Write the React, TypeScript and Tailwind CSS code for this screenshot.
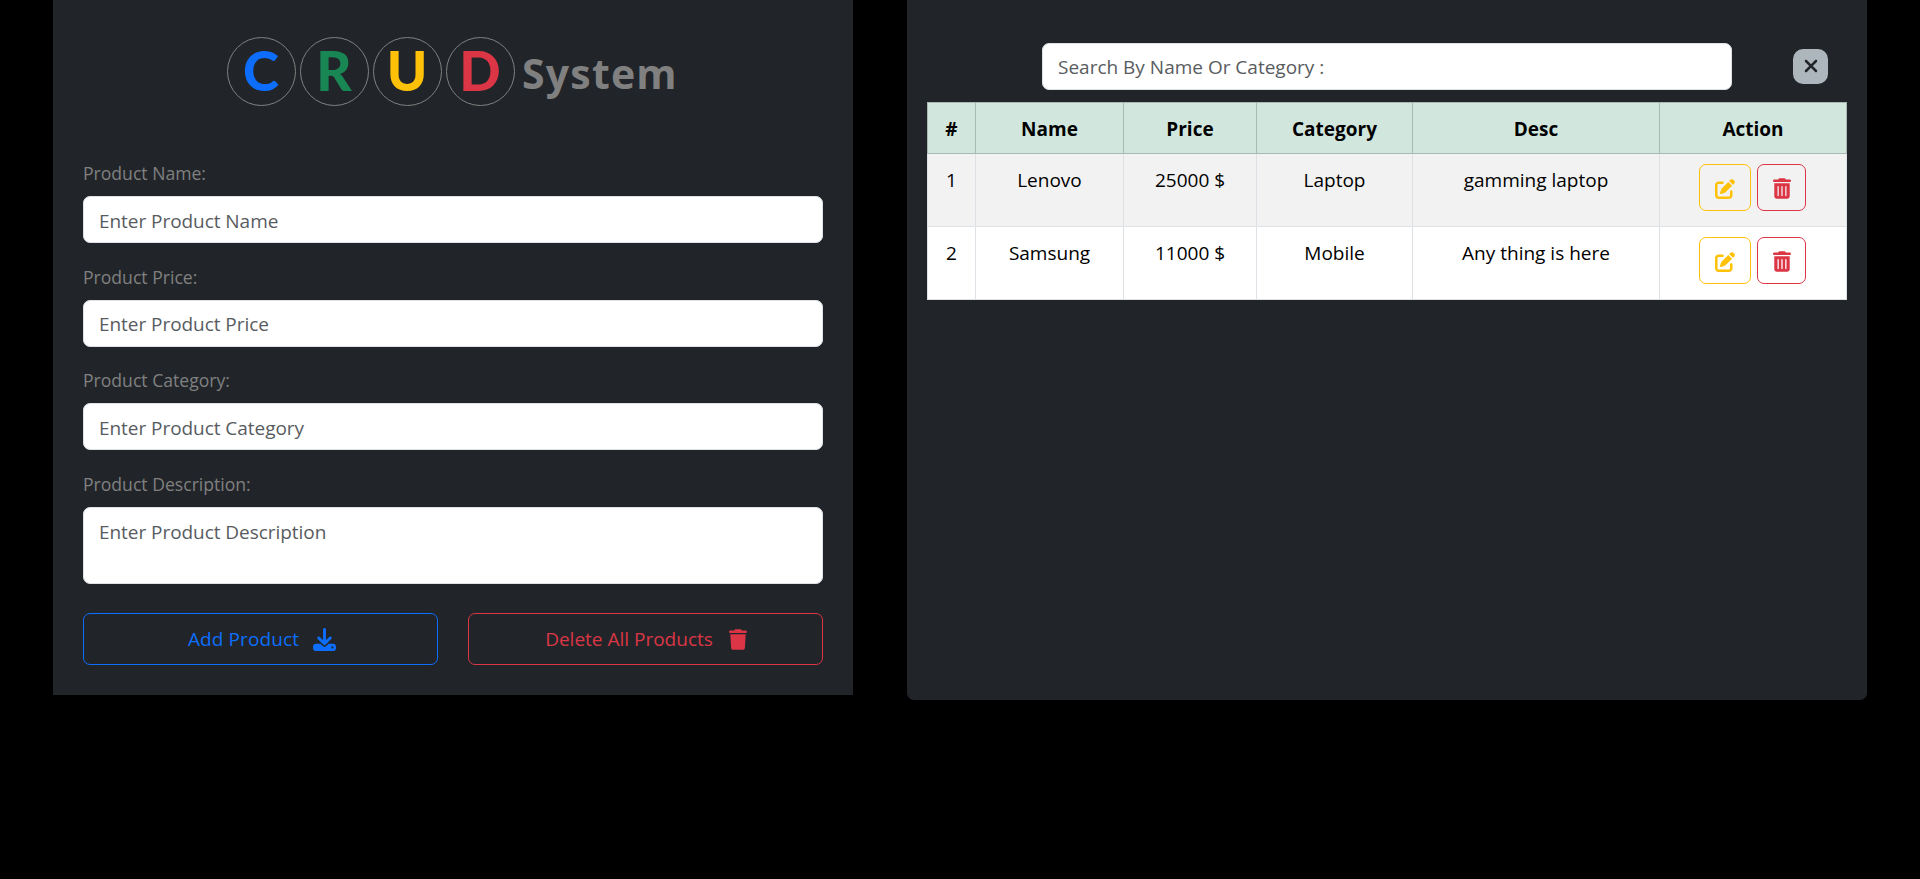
import React from "react";
import { FaDownload, FaTrash, FaTrashCan, FaPenToSquare, FaXmark } from "react-icons/fa6";

const letters = [
  { char: "C", color: "text-[#0d6efd]" },
  { char: "R", color: "text-[#198754]" },
  { char: "U", color: "text-[#ffc107]" },
  { char: "D", color: "text-[#dc3545]" },
];

const fields = [
  { label: "Product Name:", placeholder: "Enter Product Name" },
  { label: "Product Price:", placeholder: "Enter Product Price" },
  { label: "Product Category:", placeholder: "Enter Product Category" },
];

const products = [
  { name: "Lenovo", price: "25000 $", category: "Laptop", desc: "gamming laptop" },
  { name: "Samsung", price: "11000 $", category: "Mobile", desc: "Any thing is here" },
];

const inputClass =
  "block w-full rounded-[7px] border border-[#dee2e6] bg-white px-[15px] text-[19px] text-[#212529] placeholder:text-[#595c5f] placeholder:opacity-100 outline-none";

function ProductForm() {
  return (
    <section className="h-[695px] w-[800px] shrink-0 bg-[#212529] px-[30px] pt-[35px]">
      <h1 className="flex h-[72px] items-center pt-px pl-[144px] font-['Lato',sans-serif] font-bold">
        {letters.map((l) => (
          <span
            key={l.char}
            className={`mr-1 flex h-[69px] w-[69px] shrink-0 items-center justify-center rounded-full border border-[#808080] pr-px pb-[3px] text-[54.5px] leading-none font-black ${l.color}`}
          >
            {l.char}
          </span>
        ))}
        <span className="ml-[3px] pt-[3px] font-['Open_Sans',sans-serif] text-[41px] leading-none font-bold tracking-[1.2px] text-[#808080]">System</span>
      </h1>
      <form className="pt-[53px]">
        {fields.map((f) => (
          <label key={f.label} className="mb-[20.5px] block">
            <span className="mb-[9px] block h-[27px] text-[17.6px] leading-[27px] text-[#808080]">{f.label}</span>
            <input className={`${inputClass} h-[47px] pt-[2px] tracking-[-0.05px]`} placeholder={f.placeholder} />
          </label>
        ))}
        <label className="block">
          <span className="mb-[9px] block h-[27px] text-[17.6px] leading-[27px] text-[#808080]">Product Description:</span>
          <textarea
            className={`${inputClass} h-[77px] resize-none py-[9px] leading-[30px] tracking-[-0.05px]`}
            placeholder="Enter Product Description"
          />
        </label>
        <div className="mt-[29.5px] grid grid-cols-2 gap-[30px]">
          <button type="button" className="flex h-[52px] items-center justify-center gap-[14px] rounded-[7px] border border-[#0d6efd] pt-px pl-[3px] text-[19px] text-[#0d6efd]">
            <span className="tracking-[0.1px]">Add Product</span>
            <FaDownload className="h-[23px] w-[23px]" />
          </button>
          <button type="button" className="flex h-[52px] items-center justify-center gap-[16px] rounded-[7px] border border-[#dc3545] pt-px pl-px text-[19px] text-[#dc3545]">
            Delete All Products
            <FaTrash className="h-[21px] w-[18px]" />
          </button>
        </div>
      </form>
    </section>
  );
}

function ProductTable() {
  return (
    <section className="h-[700px] w-[960px] shrink-0 rounded-b-[7px] bg-[#212529] px-5 pt-[43px]">
      <div className="flex items-start pl-[115px]">
        <input className={`${inputClass} h-[47px] !w-[690px]`} placeholder="Search By Name Or Category :" />
        <button type="button" className="mt-[6px] ml-[61px] flex h-[35px] w-[35px] items-center justify-center rounded-[10px] bg-[#adb5bd] pb-[2px] text-[#212529]">
          <FaXmark className="h-5 w-5" />
        </button>
      </div>
      <table className="mt-3 w-[919px] table-fixed border-collapse text-center text-[19px] text-black">
        <colgroup>
          <col className="w-[48px]" />
          <col className="w-[148px]" />
          <col className="w-[133px]" />
          <col className="w-[156px]" />
          <col className="w-[247px]" />
          <col className="w-[187px]" />
        </colgroup>
        <thead>
          <tr className="h-[51px] bg-[#d1e7dd]">
            {["#", "Name", "Price", "Category", "Desc", "Action"].map((h) => (
              <th key={h} className="border border-[#a7b9b1] pt-[3px] font-bold">
                {h}
              </th>
            ))}
          </tr>
        </thead>
        <tbody>
          {products.map((p, i) => (
            <tr key={p.name} className="h-[73px] align-top odd:bg-[#f2f2f2] even:bg-white [&>td]:border [&>td]:border-[#dee2e6] [&>td]:pt-[10px] [&>td]:leading-[32px]">
              <td>{i + 1}</td>
              <td>{p.name}</td>
              <td>{p.price}</td>
              <td>{p.category}</td>
              <td>{p.desc}</td>
              <td>
                <div className="flex justify-center gap-[6px] pr-px">
                  <button type="button" className="flex h-[47px] w-[52px] items-center justify-center rounded-[7px] border border-[#ffc107] pt-[2px] text-[#ffc107]">
                    <FaPenToSquare className="h-5 w-5" />
                  </button>
                  <button type="button" className="flex h-[47px] w-[49px] items-center justify-center rounded-[7px] border border-[#dc3545] pt-[2px] text-[#dc3545]">
                    <FaTrashCan className="h-[21px] w-[18px]" />
                  </button>
                </div>
              </td>
            </tr>
          ))}
        </tbody>
      </table>
    </section>
  );
}

export default function App() {
  return (
    <main className="flex min-h-screen items-start gap-[54px] bg-black pl-[53px] font-['Open_Sans',sans-serif]">
      <ProductForm />
      <ProductTable />
    </main>
  );
}
